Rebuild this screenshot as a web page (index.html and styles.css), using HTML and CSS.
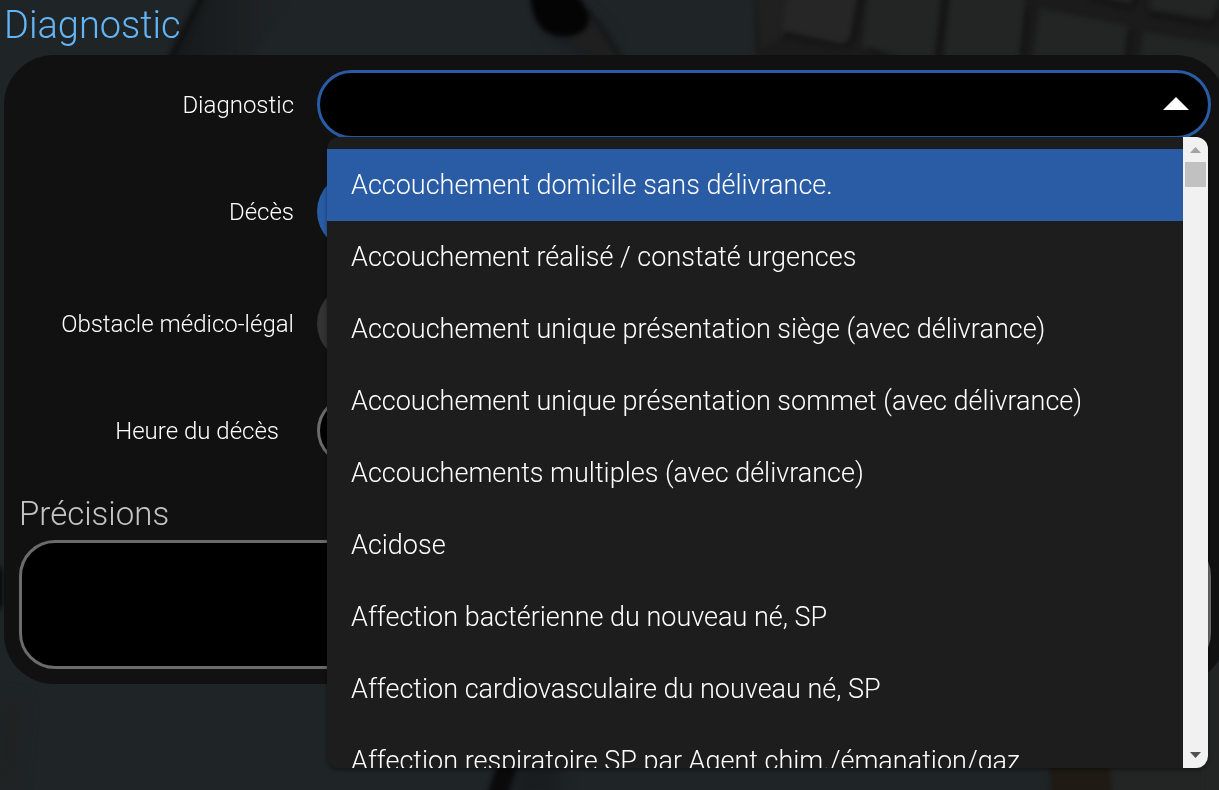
FILE: index.html
```html
<!DOCTYPE html>
<html lang="fr">
<head>
    <meta charset="UTF-8">
    <meta name="viewport" content="width=device-width, initial-scale=1.0">
    <title>Diagnostic</title>
    <link rel="stylesheet" href="styles.css">
</head>
<body>
    <!-- desk background: stethoscope, keyboard -->
    <svg class="backdrop" viewBox="0 0 1219 790" preserveAspectRatio="xMidYMid slice" aria-hidden="true">
        <defs>
            <filter id="soft" filterUnits="userSpaceOnUse" x="-20" y="-20" width="1280" height="830" color-interpolation-filters="sRGB"><feGaussianBlur stdDeviation="2.5"/></filter>
            <filter id="softer" filterUnits="userSpaceOnUse" x="-20" y="-20" width="1280" height="830" color-interpolation-filters="sRGB"><feGaussianBlur stdDeviation="8"/></filter>
            <linearGradient id="shade" x1="0" x2="1" y1="0" y2="0">
                <stop offset="0" stop-color="#171a1b"/>
                <stop offset="1" stop-color="#1f2426"/>
            </linearGradient>
        </defs>
        <rect width="1219" height="790" fill="#1f2427"/>
        <path d="M208 -5H290L250 60H175Z" fill="url(#shade)" filter="url(#soft)"/>
        <path d="M206 -10L168 66" stroke="#121212" stroke-width="9" filter="url(#soft)"/>
        <path d="M545 35L600 65L610 40L580 10Z" fill="#181e22" filter="url(#softer)"/>
        <path d="M585 15Q605 30 622 62L590 62Q585 45 565 40Z" fill="#1f1f1f" filter="url(#soft)"/>
        <path d="M588 12Q605 30 622 62" fill="none" stroke="#151515" stroke-width="4" filter="url(#soft)"/>
        <path d="M530 -15Q529 20 546 32Q562 40 578 34Q592 28 588 12Q582 0 570 -15Z" fill="#040404" filter="url(#soft)"/>
        <path d="M755 -15H1250V90H755Z" fill="#1b1b1b" filter="url(#soft)"/>
        <path d="M755 -15H790L784 36L762 50Z" fill="#202020" filter="url(#soft)"/>
        <g fill="#232424" filter="url(#soft)">
            <path d="M787 -8H858L850 40Q846 49 838 46L781 32Z" fill="#262626"/>
            <path d="M868 -8H941L933 75L862 48Z"/>
            <path d="M950 -8H1022L1026 6L1018 75H942Z"/>
            <path d="M1040 8L1129 26L1122 75H1030Z"/>
            <path d="M1080 -10H1136Q1134 8 1126 5Z"/>
            <path d="M1152 -15H1222L1214 20L1150 10Z"/>
            <path d="M1144 32L1240 48V80H1136Z"/>
        </g>
        <g fill="none" stroke="#131313" stroke-width="4" filter="url(#soft)">
            <path d="M784 34L838 46Q850 48 854 36L862 -5"/>
            <path d="M868 50L900 60"/>
            <path d="M946 -5L936 75"/>
            <path d="M1028 6L1021 75"/>
            <path d="M1090 -2L1128 7Q1136 6 1138 -5"/>
            <path d="M1131 30L1126 75"/>
            <path d="M1150 14L1208 25Q1216 24 1219 10"/>
        </g>
        <path d="M-16 550L2 570V605L-16 630Z" fill="#050505" filter="url(#soft)"/>
        <path d="M0 700L22 700L15 790H0Z" fill="#1f2220" filter="url(#softer)"/>
        <path d="M520 760H560V800H510Z" fill="#191d1f" filter="url(#softer)"/>
        <path d="M511 755L494 805" stroke="#0a0a0a" stroke-width="20" filter="url(#soft)"/>
        <path d="M1100 750H1250V810H1112Z" fill="#232525" filter="url(#soft)"/>
        <path d="M1049 750H1108L1114 810H1052Z" fill="#1f1a13" filter="url(#soft)"/>
        <path d="M1205 660H1250V810H1205Z" fill="#232525" filter="url(#soft)"/>
    </svg>

    <main class="page">
        <h1>Diagnostic</h1>
        <form class="panel">
            <div class="row">
                <label for="diagnostic">Diagnostic</label>
                <div class="combo">
                    <select id="diagnostic" class="field active">
                        <option value=""></option>
                    </select>
                    <svg class="caret" viewBox="0 0 26 13" aria-hidden="true"><path d="M0 13L13 0L26 13Z"/></svg>

                    <div class="dropdown">
                        <ul class="options" role="listbox" aria-label="Diagnostic">
                            <li role="option" class="selected" aria-selected="true">Accouchement domicile sans délivrance.</li>
                            <li role="option">Accouchement réalisé / constaté urgences</li>
                            <li role="option">Accouchement unique présentation siège (avec délivrance)</li>
                            <li role="option">Accouchement unique présentation sommet (avec délivrance)</li>
                            <li role="option">Accouchements multiples (avec délivrance)</li>
                            <li role="option">Acidose</li>
                            <li role="option">Affection bactérienne du nouveau né, SP</li>
                            <li role="option">Affection cardiovasculaire du nouveau né, SP</li>
                            <li role="option">Affection respiratoire SP par Agent chim./émanation/gaz</li>
                        </ul>
                        <div class="scrollbar" aria-hidden="true">
                            <svg class="arrow up" viewBox="0 0 11 6"><path d="M0 6L5.5 0L11 6Z"/></svg>
                            <div class="thumb"></div>
                            <svg class="arrow down" viewBox="0 0 11 6"><path d="M0 0L5.5 6L11 0Z"/></svg>
                        </div>
                    </div>
                </div>
            </div>
            <div class="row">
                <label for="deces">Décès</label>
                <input type="checkbox" id="deces" class="toggle" checked>
            </div>
            <div class="row">
                <label for="obstacle">Obstacle médico-légal</label>
                <input type="checkbox" id="obstacle" class="toggle">
            </div>
            <div class="row">
                <label for="heure" class="inset">Heure du décès</label>
                <input type="text" id="heure" class="field short">
            </div>
            <label for="precisions" class="heading">Précisions</label>
            <textarea id="precisions"></textarea>
        </form>
    </main>
</body>
</html>
```
FILE: styles.css
```css
* {
    box-sizing: border-box;
}
body {
    margin: 0;
    min-height: 100vh;
    overflow: hidden;
    background-color: #1f2427;
    color: #fff;
    font-family: Roboto, sans-serif;
    font-weight: 300;
}
.backdrop {
    position: fixed;
    top: 0;
    left: 0;
    width: 100%;
    height: 100%;
    z-index: -1;
}
.page {
    padding-left: 4px;
    margin-right: -7px;
}
h1 {
    margin: 0;
    padding-bottom: 5px;
    color: #64b5f6;
    font-size: 38px;
    font-weight: 300;
    line-height: 50px;
}
.panel {
    display: flex;
    flex-direction: column;
    gap: 33px;
    padding: 15px;
    border-radius: 50px;
    background-color: #111;
}
.row {
    display: grid;
    grid-template-columns: 275px 1fr;
    column-gap: 23px;
    align-items: center;
}
.row label {
    font-size: 24px;
    text-align: right;
}
.row .inset {
    padding-right: 15px;
}
.field {
    display: block;
    width: 100%;
    height: 69px;
    padding: 0 30px;
    border: 3px solid #6b6b6b;
    border-radius: 36px;
    background-color: #000;
    color: #fff;
    font: inherit;
    appearance: none;
}
.field.active {
    border-color: #295ca5;
}
.field.short {
    width: 50%;
}
.combo {
    position: relative;
}
.caret {
    position: absolute;
    top: 27px;
    right: 22px;
    width: 26px;
    height: 13px;
    fill: #fff;
    pointer-events: none;
}
.toggle {
    width: 150px;
    height: 79px;
    margin: 0;
    border-radius: 40px;
    background-color: #333;
    appearance: none;
}
.toggle:checked {
    background-color: #295ca5;
}

/* open list */
.dropdown {
    position: absolute;
    top: 67px;
    left: 10px;
    right: 3px;
    z-index: 1;
    display: flex;
    height: 80vh;
    max-height: 631px;
    overflow: hidden;
    border-radius: 12px;
    background-color: #1d1d1d;
    box-shadow: 0 2px 4px rgba(0, 0, 0, 0.4);
}
.options {
    flex: 1;
    margin: 0;
    padding: 12px 0;
    overflow: hidden;
    list-style-type: none;
}
.options li {
    padding: 0 24px;
    font-size: 27px;
    line-height: 72px;
    white-space: nowrap;
    cursor: pointer;
}
.options .selected {
    background-color: #295ca5;
}
.scrollbar {
    display: flex;
    flex-direction: column;
    align-items: center;
    width: 25px;
    padding: 10px 0;
    background-color: #f1f1f1;
}
.arrow {
    width: 11px;
    height: 6px;
    fill: #a3a3a3;
}
.arrow.down {
    margin-top: auto;
    fill: #505050;
}
.thumb {
    width: 21px;
    height: 25px;
    margin-top: 9px;
    background-color: #c1c1c1;
}

.heading {
    margin-bottom: -23px;
    color: #c4c4c4;
    font-size: 33px;
    line-height: 32px;
}
textarea {
    width: 100%;
    height: 129px;
    padding: 20px 30px;
    border: 3px solid #6b6b6b;
    border-radius: 36px;
    background-color: #000;
    color: #fff;
    font: inherit;
    resize: none;
}
```
